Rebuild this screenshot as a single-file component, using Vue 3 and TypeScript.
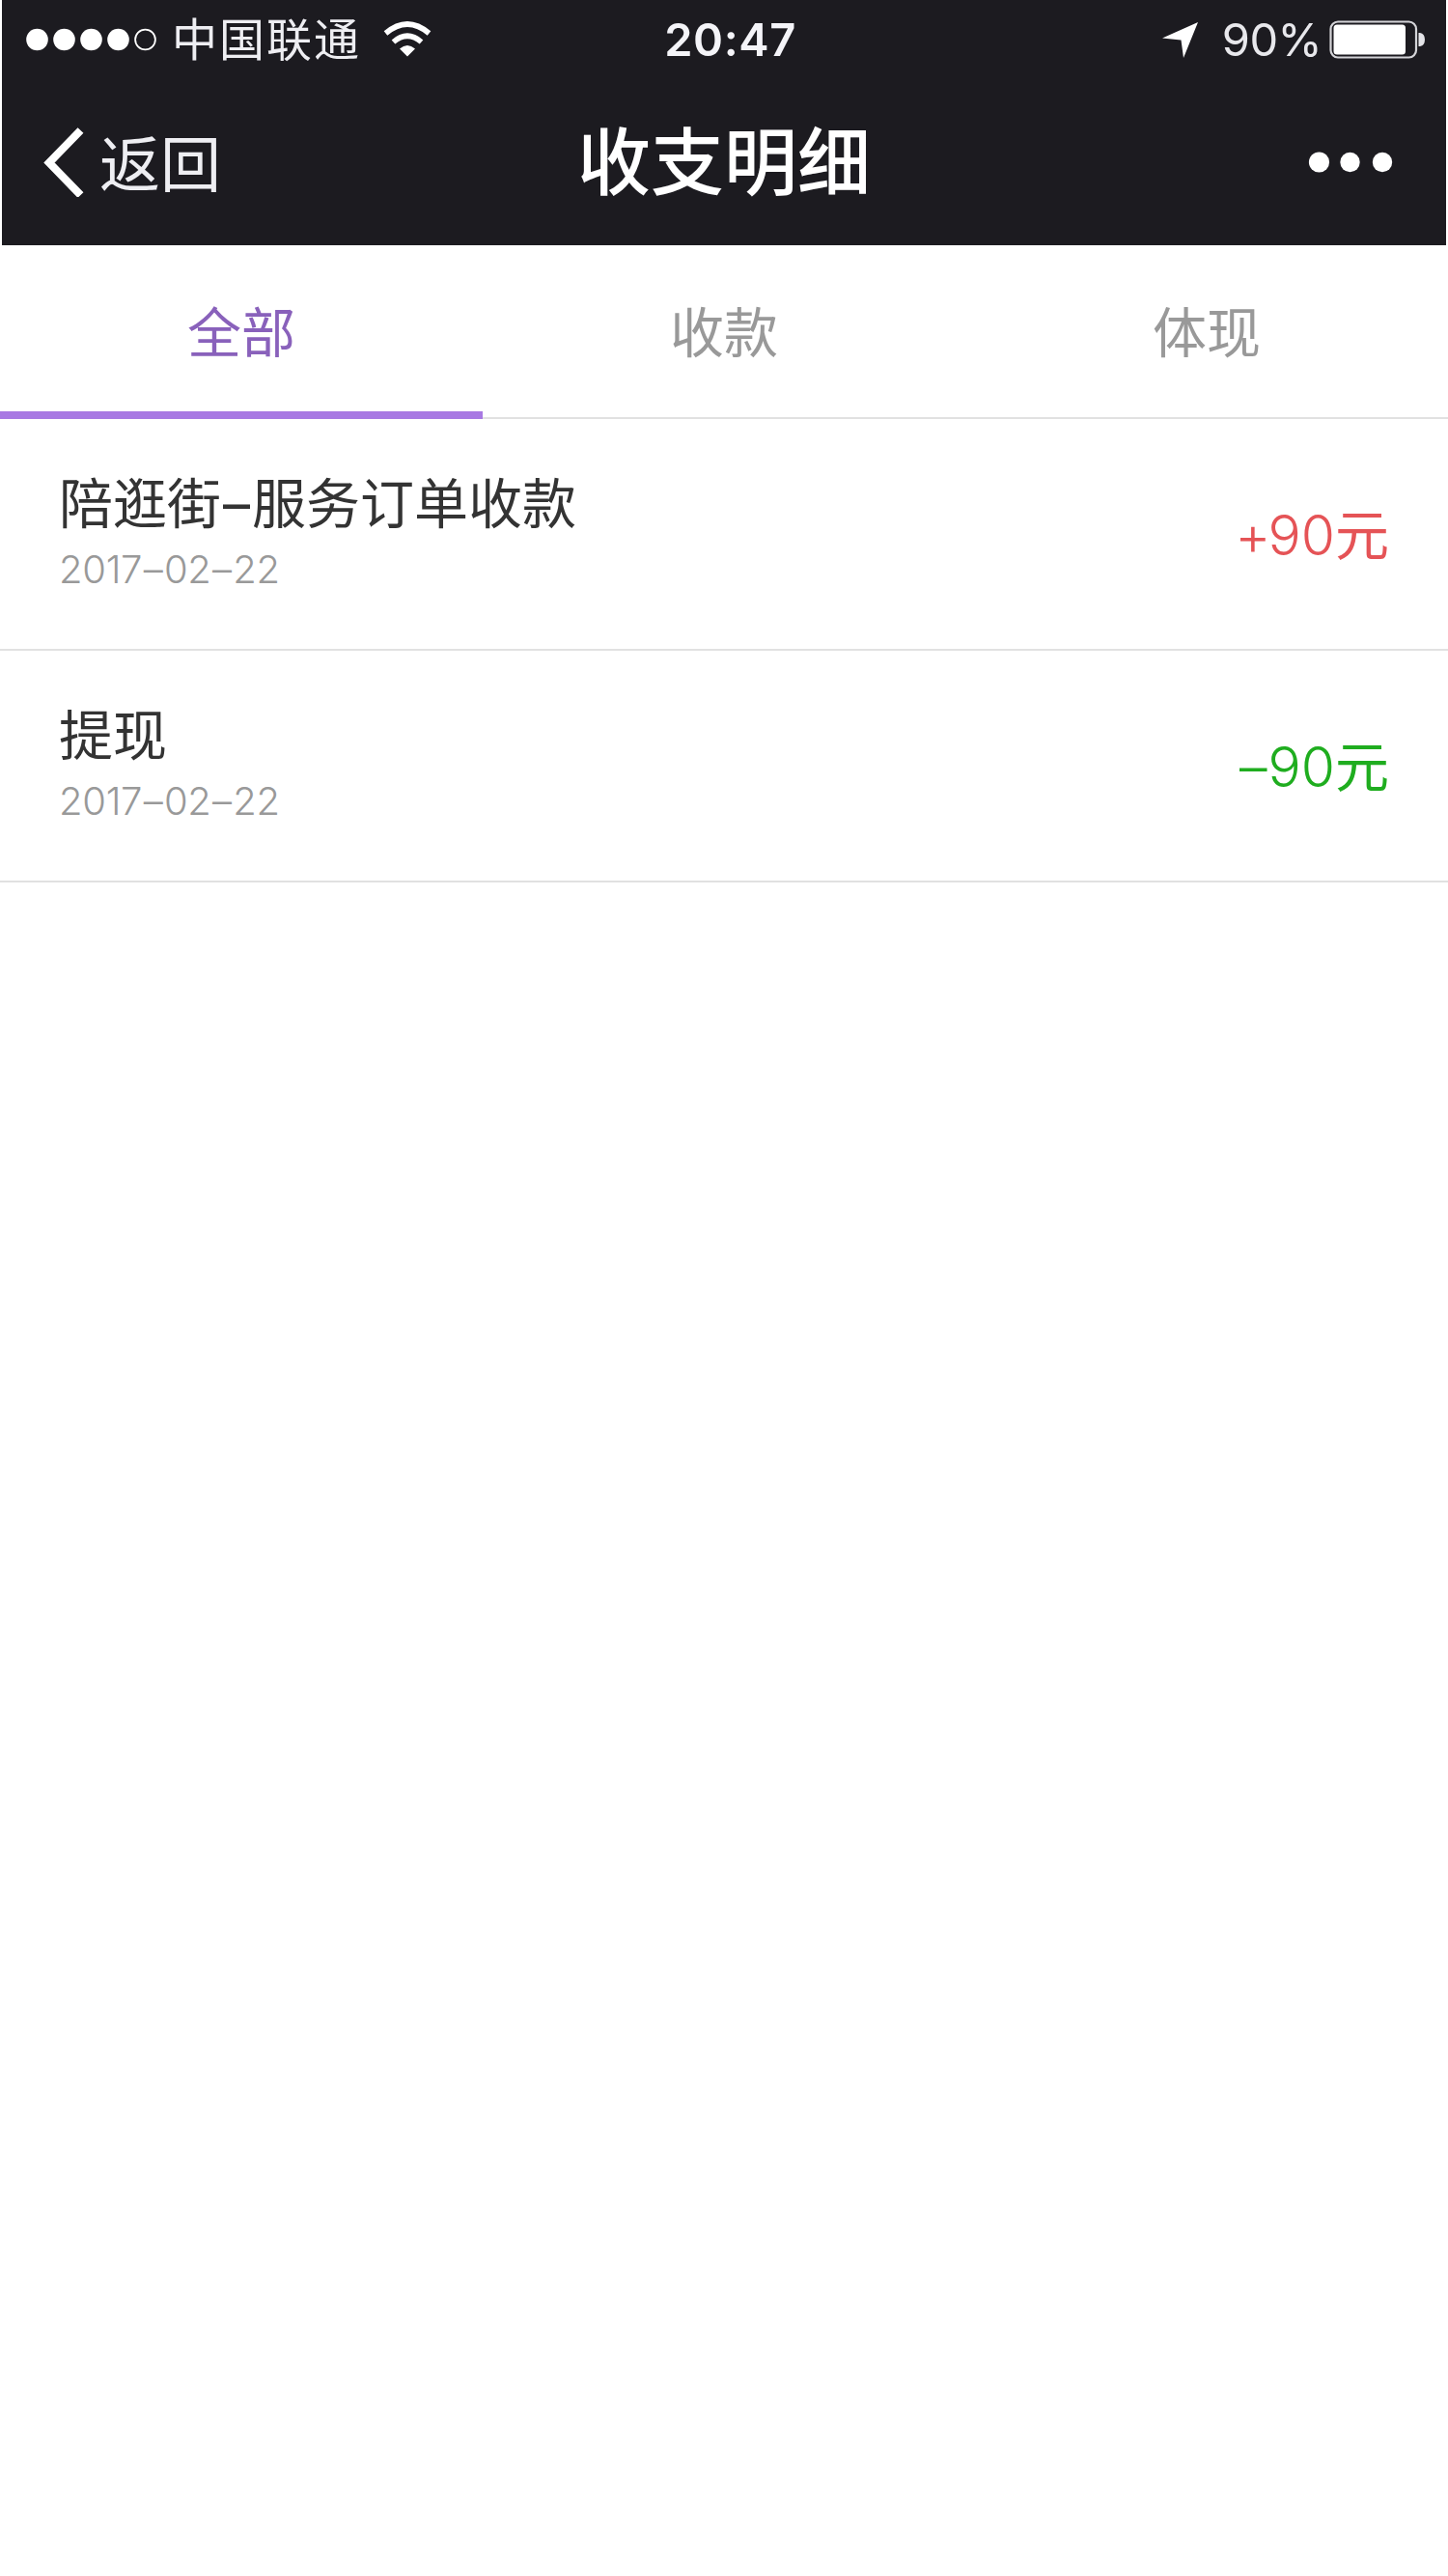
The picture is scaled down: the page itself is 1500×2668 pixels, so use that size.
<script setup lang="ts">
import { ref } from 'vue'

interface Entry {
  title: string
  date: string
  sign: string
  amount: number
  kind: 'income' | 'expense'
}

const tabs = ['全部', '收款', '体现']
const active = ref(0)

const entries: Entry[] = [
  { title: '陪逛街–服务订单收款', date: '2017–02–22', sign: '+', amount: 90, kind: 'income' },
  { title: '提现', date: '2017–02–22', sign: '–', amount: 90, kind: 'expense' },
]

// Keeps the dashes as separate pieces so they can carry their own spacing.
const pieces = (text: string): string[] => text.split(/(–)/)
</script>

<template>
  <div class="page">
    <header class="top">
      <div class="status soft">
        <div class="status-left">
          <svg class="signal" width="138" height="26" viewBox="0 0 138 26" fill="#fff">
            <circle cx="12.5" cy="13" r="11.3" />
            <circle cx="40.5" cy="13" r="11.3" />
            <circle cx="68.5" cy="13" r="11.3" />
            <circle cx="96.5" cy="13" r="11.3" />
            <circle cx="124.5" cy="13" r="10.4" fill="none" stroke="#fff" stroke-width="1.8" />
          </svg>
          <span class="carrier">中国联通</span>
          <svg class="wifi" width="52" height="40" viewBox="0 0 52 40" fill="none" stroke="#fff">
            <path d="M3.5 13.5Q26 -5.5 48.5 13.5" stroke-width="5.6" />
            <path d="M11.5 22.5Q26 10 40.5 22.5" stroke-width="5.6" />
            <path d="M18 29.5Q26 22.5 34 29.5L26 37.5Z" fill="#fff" stroke="none" />
          </svg>
        </div>
        <span class="clock">20:47</span>
        <div class="status-right">
          <svg class="arrow" width="38" height="38" viewBox="0 0 38 38" fill="#fff">
            <path d="M37 1L22 38L19.5 19.5L0 17.5Z" />
          </svg>
          <span class="percent">90%</span>
          <svg class="battery" width="100" height="40" viewBox="0 0 100 40">
            <rect x="1.5" y="1.5" width="88.5" height="37" rx="7.5" fill="none" stroke="#d4d4d8" stroke-width="2.2" />
            <rect x="4.5" y="4.5" width="74.5" height="31" rx="3.5" fill="#fff" />
            <path d="M92.5 13H94Q99 14 99 20T94 27H92.5Z" fill="#e4e4e8" />
          </svg>
        </div>
      </div>
      <div class="nav">
        <div class="back soft">
          <svg width="42" height="72" viewBox="0 0 42 72" fill="none" stroke="#fff" stroke-width="8.2">
            <path d="M38.5 3L6 36.5L38.5 70" />
          </svg>
          <span class="back-text">返回</span>
        </div>
        <h1>收支明细</h1>
        <svg class="more soft" width="90" height="24" viewBox="0 0 90 24" fill="#fff">
          <circle cx="11.5" cy="12" r="10.6" />
          <circle cx="43.5" cy="12" r="10.2" />
          <circle cx="77" cy="12" r="10.2" />
        </svg>
      </div>
    </header>

    <nav class="tabs">
      <button
        v-for="(tab, i) in tabs"
        :key="tab"
        class="tab"
        :class="{ active: active === i }"
        @click="active = i"
      >{{ tab }}</button>
    </nav>

    <ul class="list">
      <li v-for="entry in entries" :key="entry.title" class="row">
        <div class="info">
          <div class="title"><span v-for="(p, i) in pieces(entry.title)" :key="i" :class="{ dash: p === '–' }">{{ p }}</span></div>
          <div class="date"><span v-for="(p, i) in pieces(entry.date)" :key="i" :class="{ dash: p === '–' }">{{ p }}</span></div>
        </div>
        <div class="amount" :class="entry.kind"><span class="num"><span class="sign">{{ entry.sign }}</span>{{ entry.amount }}</span>元</div>
      </li>
    </ul>
  </div>
</template>

<style>
body {
  background: #fff;
}
</style>

<style scoped>
.page {
  width: 1500px;
  height: 2668px;
  overflow: hidden;
  background: #fff;
  font-family: Inter, "Noto Sans CJK SC", sans-serif;
}
.top {
  height: 254px;
  margin: 0 2px;
  background: #1c1b20;
  color: #fff;
}
.soft {
  filter: blur(0.7px);
}
.status {
  display: grid;
  grid-template-columns: 1fr auto 1fr;
  align-items: center;
  height: 82px;
  padding: 0 21px 0 24px;
}
.status-left,
.status-right {
  display: flex;
  align-items: center;
}
.status-right {
  justify-content: flex-end;
}
.carrier {
  margin-left: 14px;
  font-size: 47px;
  letter-spacing: 2px;
  line-height: 82px;
  color: #eeeef2;
  font-weight: 400;
}
.wifi {
  margin: 0 0 0 22px;
}
.clock {
  margin-left: 10px;
  font-size: 47px;
  font-weight: 600;
  line-height: 82px;
  letter-spacing: 0.6px;
  color: #f4f4f8;
}
.percent {
  margin: 0 8px 0 24px;
  font-size: 47px;
  font-weight: 400;
  line-height: 82px;
  letter-spacing: -0.6px;
  color: #e8e8ec;
}
.nav {
  display: grid;
  grid-template-columns: 1fr auto 1fr;
  align-items: center;
  height: 172px;
  padding: 0 53px 0 43px;
}
.back {
  display: flex;
  align-items: center;
}
.back-text {
  margin-left: 16px;
  padding-top: 4px;
  font-size: 63px;
  line-height: 168px;
  font-weight: 400;
  color: #eeeef2;
}
h1 {
  margin: 0 0 0 10px;
  font-size: 76px;
  font-weight: 500;
  line-height: 172px;
}
.more {
  justify-self: end;
}
.tabs {
  display: flex;
  height: 180px;
  box-sizing: border-box;
  border-bottom: 2px solid #e1e1e1;
}
.tab {
  flex: 1;
  height: 180px;
  box-sizing: border-box;
  margin: 0;
  padding: 10px 0 0;
  border: 0;
  border-bottom: 8px solid transparent;
  background: none;
  font: 400 56px/162px Inter, "Noto Sans CJK SC", sans-serif;
  color: #999;
}
.tab.active {
  color: #8961bb;
  border-bottom-color: #a879e3;
}
.list {
  margin: 0;
  padding: 0;
  list-style: none;
}
.row {
  display: flex;
  justify-content: space-between;
  height: 240px;
  box-sizing: border-box;
  padding: 49px 61px 0;
  border-bottom: 2px solid #e1e1e1;
  font-feature-settings: "calt" 0;
}
.title {
  font-size: 56px;
  font-weight: 400;
  line-height: 79px;
  color: #333;
}
.title .dash {
  padding: 0 2px;
}
.date {
  font-size: 40px;
  font-weight: 350;
  line-height: 56px;
  letter-spacing: -0.3px;
  color: #999;
}
.date .dash {
  padding: 0 1.5px;
}
.amount {
  font-size: 56px;
  font-weight: 400;
  line-height: 144px;
}
.num {
  font-size: 57px;
  font-weight: 350;
}
.income .sign {
  margin-right: -3px;
}
.expense .sign {
  margin-right: 1px;
}
.income {
  color: #e55356;
}
.expense {
  color: #1fad1f;
}
</style>
